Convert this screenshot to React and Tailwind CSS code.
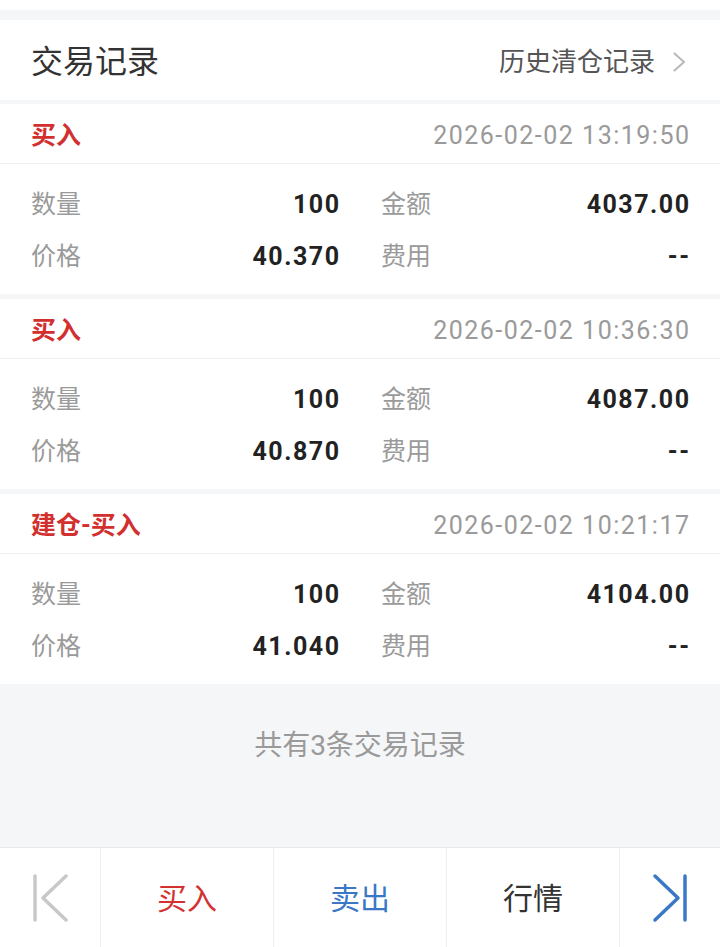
const trades = [
  { type: '买入', time: '2026-02-02 13:19:50', qty: '100', amount: '4037.00', price: '40.370', fee: '--' },
  { type: '买入', time: '2026-02-02 10:36:30', qty: '100', amount: '4087.00', price: '40.870', fee: '--' },
  { type: '建仓-买入', time: '2026-02-02 10:21:17', qty: '100', amount: '4104.00', price: '41.040', fee: '--' }
];

function Cell({ label, value }) {
  return (
    <div className="flex h-[52px] items-center justify-between">
      <span className="text-[25px] text-[#9a9a9a]">{label}</span>
      <span className="mr-[-1.5px] text-[25px] font-bold tracking-[1.5px] text-[#222]">{value}</span>
    </div>
  );
}

function TradeCard({ trade }) {
  return (
    <section className="bg-white">
      <div className="flex h-[60px] items-center justify-between border-b border-[#f0f0f0] px-[31px] pt-[4px]">
        <span className="text-[25px] font-bold text-[#d22f2f]">{trade.type}</span>
        <span className="mr-[-1.5px] text-[25px] tracking-[1.5px] text-[#9a9a9a]">{trade.time}</span>
      </div>
      <div className="grid grid-cols-2 gap-x-[42px] px-[31px] pt-[15px] pb-[11px]">
        <Cell label="数量" value={trade.qty} />
        <Cell label="金额" value={trade.amount} />
        <Cell label="价格" value={trade.price} />
        <Cell label="费用" value={trade.fee} />
      </div>
    </section>
  );
}

export default function App() {
  return (
    <div className="flex h-[947px] w-[720px] flex-col overflow-hidden bg-[#f5f6f8] font-['Roboto','Noto_Sans_CJK_SC',sans-serif]">
      <div className="h-[10px] bg-white" />
      <div className="h-[10px]" />
      <header className="flex h-[80px] items-center justify-between bg-white pl-[31px] pr-[34px] pt-[4px]">
        <h1 className="text-[32px] text-[#333]">交易记录</h1>
        <div className="flex items-center gap-[18px]">
          <span className="text-[26px] text-[#555]">历史清仓记录</span>
          <svg width="13" height="20" viewBox="0 0 13 20" fill="none">
            <polyline points="1.5,1.5 11,10 1.5,18.5" stroke="#b8b8b8" strokeWidth="2" strokeLinecap="round" strokeLinejoin="round" />
          </svg>
        </div>
      </header>
      <div className="flex flex-col gap-[5px] pt-[4px]">
        {trades.map((trade) => (
          <TradeCard key={trade.time} trade={trade} />
        ))}
      </div>
      <div className="flex flex-1 justify-center pt-[46px]">
        <p className="text-[28px] leading-[32px] text-[#9a9a9a]">共有3条交易记录</p>
      </div>
      <nav className="flex h-[100px] shrink-0 border-t border-[#e8e8e8] bg-white">
        <div className="flex w-[100px] items-center justify-center">
          <svg width="36" height="50" viewBox="0 0 36 50" fill="none">
            <line x1="3" y1="3" x2="3" y2="47" stroke="#c8c8c8" strokeWidth="3.5" strokeLinecap="round" />
            <polyline points="34,3 11,25 34,47" stroke="#c8c8c8" strokeWidth="3.5" strokeLinecap="round" strokeLinejoin="round" />
          </svg>
        </div>
        <button type="button" className="flex w-[173px] items-center justify-center border-l border-[#eee] pt-[2px] text-[30px] text-[#d43232]">
          买入
        </button>
        <button type="button" className="flex w-[173px] items-center justify-center border-l border-[#eee] pt-[2px] text-[30px] text-[#3a78c6]">
          卖出
        </button>
        <button type="button" className="flex w-[173px] items-center justify-center border-l border-[#eee] pt-[2px] text-[30px] text-[#333]">
          行情
        </button>
        <div className="flex flex-1 items-center justify-center border-l border-[#eee]">
          <svg width="36" height="50" viewBox="0 0 36 50" fill="none">
            <polyline points="3,3 26,25 3,47" stroke="#3a78c6" strokeWidth="3.5" strokeLinecap="round" strokeLinejoin="round" />
            <line x1="33" y1="3" x2="33" y2="47" stroke="#3a78c6" strokeWidth="3.5" strokeLinecap="round" />
          </svg>
        </div>
      </nav>
    </div>
  );
}
